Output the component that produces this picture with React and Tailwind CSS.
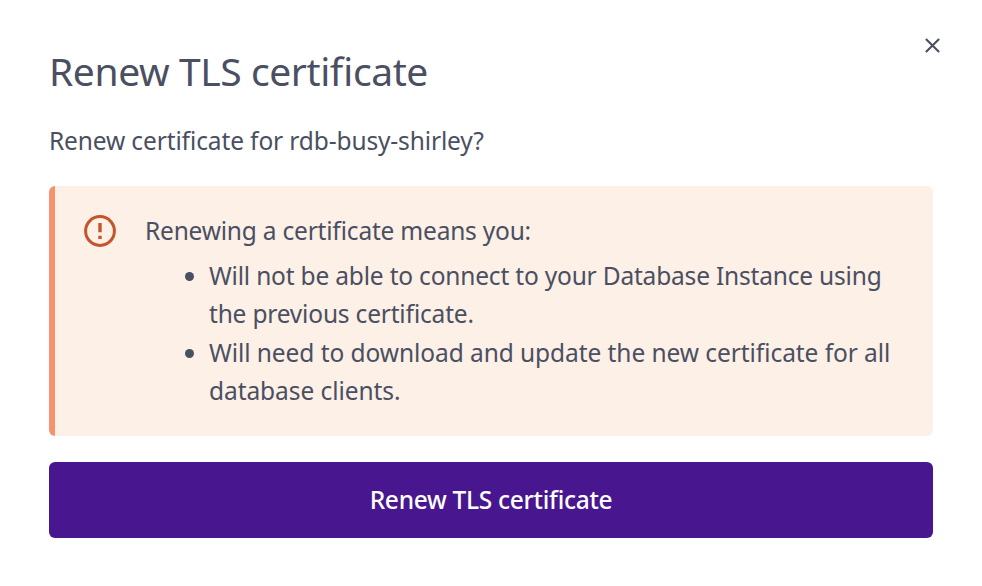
export default function App() {
  return (
    <main className="h-[586px] w-[982px] bg-white px-[49px] pt-[47px] font-['Noto_Sans',sans-serif] text-[#4a4f62] [font-feature-settings:'liga'_1]">
      <header className="flex h-[50px] w-[892px] items-start justify-between">
        <h1 className="whitespace-nowrap text-[39px] leading-[48px] tracking-[-0.41px]">Renew TLS certificate</h1>
        <button aria-label="Close" className="-mt-[9px] h-[16px] w-[16px]">
          <svg width="16" height="16" viewBox="0 0 16 16" fill="none" stroke="#4a4f62" strokeWidth="2.1"><path d="M.9.9l13.2 13.2M14.1.9L.9 14.1" /></svg>
        </button>
      </header>
      <p className="mt-[28px] h-[32px] whitespace-nowrap text-[24.5px] leading-[32px] tracking-[-0.13px]">Renew certificate for rdb-busy-shirley?</p>
      <section className="mt-[29px] flex h-[250px] w-[884px] rounded-[6px] border-l-[6px] border-[#f59272] bg-[#fdf0e6] pl-[29px] pt-[26px]">
        <svg width="32" height="32" className="mt-[3px] shrink-0" viewBox="0 0 32 32" fill="none" stroke="#c5532d" strokeWidth="3"><circle cx="16" cy="16" r="14.4" /><path d="M16 8v9.3M16 20.7v3.3" strokeWidth="3.4" /></svg>
        <div className="ml-[29px] whitespace-nowrap text-[24.5px] leading-[38px]">
          <p className="tracking-[-0.21px]">Renewing a certificate means you:</p>
          <ul className="mt-[7px] list-disc pl-[64px]">
            <li className="tracking-[-0.19px]">Will not be able to connect to your Database Instance using<br />the previous certificate.</li>
            <li className="mt-px tracking-[-0.07px]">Will need to download and update the new certificate for all<br />database clients.</li>
          </ul>
        </div>
      </section>
      <button className="mt-[26px] h-[76px] w-[884px] rounded-[6px] bg-[#48168f] text-[24.5px] font-medium tracking-[-0.3px] text-white">Renew TLS certificate</button>
    </main>
  );
}
